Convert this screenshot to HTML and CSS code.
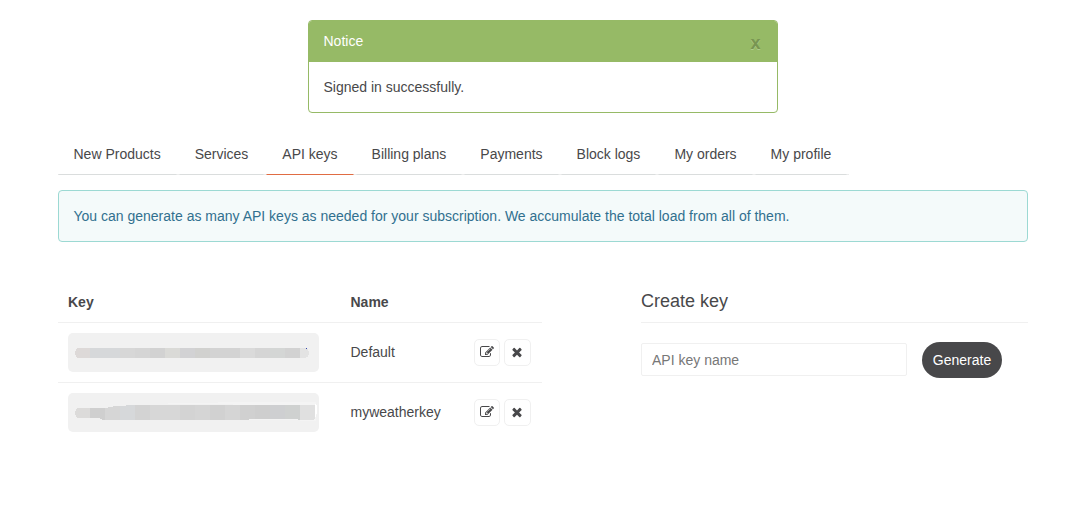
FILE: index.html
```html
<!DOCTYPE html>
<html lang="en">
<head>
<meta charset="utf-8">
<title>API keys</title>
<link rel="stylesheet" href="styles.css">
</head>
<body>
<svg class="sprite" aria-hidden="true">
  <symbol id="edit" viewBox="0 0 1792 1792"><path d="M888 1184l116-116-152-152-116 116v56h96v96h56zm440-720q-16-16-33 1l-350 350q-17 17-1 33t33-1l350-350q17-17 1-33zm80 594v190q0 119-84.5 203.5t-203.5 84.5h-832q-119 0-203.5-84.5t-84.5-203.5v-832q0-119 84.5-203.5t203.5-84.5h832q63 0 117 25 15 7 18 23 3 17-9 29l-49 49q-14 14-32 8-23-6-45-6h-832q-66 0-113 47t-47 113v832q0 66 47 113t113 47h832q66 0 113-47t47-113v-126q0-13 9-22l64-64q15-15 35-7t20 29zm-96-738l288 288-672 672h-288v-288zm444 132l-92 92-288-288 92-92q28-28 68-28t68 28l152 152q28 28 28 68t-28 68z"/></symbol>
  <symbol id="times" viewBox="0 0 1792 1792"><path d="M1490 1322q0 40-28 68l-136 136q-28 28-68 28t-68-28l-294-294-294 294q-28 28-68 28t-68-28l-136-136q-28-28-28-68t28-68l294-294-294-294q-28-28-28-68t28-68l136-136q28-28 68-28t68 28l294 294 294-294q28-28 68-28t68 28l136 136q28 28 28 68t-28 68l-294 294 294 294q28 28 28 68z"/></symbol>
</svg>
<main class="container">
  <section class="notice">
    <header class="notice-head"><span>Notice</span><button class="notice-close">x</button></header>
    <div class="notice-body">Signed in successfully.</div>
  </section>

  <nav class="tabs">
    <a class="tab">New Products</a><a class="tab">Services</a><a class="tab active">API keys</a><a class="tab">Billing plans</a><a class="tab">Payments</a><a class="tab">Block logs</a><a class="tab">My orders</a><a class="tab">My profile</a>
  </nav>

  <div class="alert">You can generate as many API keys as needed for your subscription. We accumulate the total load from all of them.</div>

  <div class="columns">
    <section class="keys">
      <div class="row head"><span>Key</span><span>Name</span></div>
      <div class="row">
        <svg class="key" viewBox="0 0 251 39" shape-rendering="crispEdges">
          <path fill="#ddd9d8" d="M9 15H22V25H9V24H8V22H7V18H8V16H9z"/>
          <path fill="#d6d8da" d="M22 15h30v10H22z"/><path fill="#d7d7d7" d="M52 15h15v10H52z"/>
          <path fill="#d5d5d5" d="M67 15h15v10H67z"/><path fill="#d2d2d2" d="M82 15h15v10H82z"/>
          <path fill="#dadad7" d="M97 15h15v10H97z"/><path fill="#d2d2d4" d="M112 15h15v10h-15z"/>
          <path fill="#d1d1cf" d="M127 15h15v10h-15z"/><path fill="#d3d3d3" d="M142 15h30v10h-30z"/>
          <path fill="#dadada" d="M172 15h15v10h-15z"/><path fill="#d5d5d5" d="M187 15h15v10h-15z"/>
          <path fill="#d4d6d5" d="M202 15h15v10h-15z"/><path fill="#d2d2d2" d="M217 15h15v10h-15z"/>
          <path fill="#e3e3e3" d="M232 15h7v1h1v2h1v4h-1v2h-2v1h-6z"/><path fill="#3546b0" d="M238 15h1v1h-1z"/>
        </svg>
        <span class="name">Default</span>
        <span class="actions"><button class="icon-btn edit"><svg><use href="#edit"/></svg></button><button class="icon-btn"><svg><use href="#times"/></svg></button></span>
      </div>
      <div class="row">
        <svg class="key" viewBox="0 0 251 39" shape-rendering="crispEdges">
          <path fill="#f4f4f4" d="M100 11V10H150V9H248V12H249V22H248V28H232V27H181V26H229V12z"/>
          <path fill="#dcdbda" d="M9 15H22V25H9V24H8V22H7V18H8V16H9z"/>
          <path fill="#cfcfcf" d="M22 15h15v12h-3v-1h-2v-1H22z"/><path fill="#d6d6d6" d="M37 15h3v-1h5v-1h7v14H37z"/>
          <path fill="#d6d8da" d="M52 13h6v-1h9v15H52z"/><path fill="#d3d3d3" d="M67 12h15v15H67z"/>
          <path fill="#d7d7d7" d="M82 12h30v15H82z"/><path fill="#d3d3d3" d="M112 12h15v15h-15z"/>
          <path fill="#d5d5d5" d="M127 12h15v15h-15z"/><path fill="#d1d1d1" d="M142 12h15v15h-15z"/>
          <path fill="#d5d5d5" d="M157 12h15v15h-15z"/><path fill="#d0d0d0" d="M172 12h15v14h-6v1h-9z"/>
          <path fill="#cecece" d="M187 12h15v14h-15z"/><path fill="#cecfd1" d="M202 12h15v14h-15z"/>
          <path fill="#cfd1d0" d="M217 12h15v15h-2v-1h-13z"/><path fill="#e0e0e0" d="M232 12h10v15h-10zM242 12h5v14h-1v1h-4z"/>
          <path fill="#fff" d="M247 11h1v1h1v9h-1v3h-1z"/>
        </svg>
        <span class="name">myweatherkey</span>
        <span class="actions"><button class="icon-btn edit"><svg><use href="#edit"/></svg></button><button class="icon-btn"><svg><use href="#times"/></svg></button></span>
      </div>
    </section>

    <section class="create">
      <h2>Create key</h2>
      <form class="create-form">
        <input type="text" placeholder="API key name">
        <button type="button" class="generate">Generate</button>
      </form>
    </section>
  </div>
</main>
</body>
</html>
```
FILE: styles.css
```css
* { box-sizing: border-box; }
body { margin: 0; background: #fff; color: #48484a; font: 14px/20px "Liberation Sans", Arial, sans-serif; }
button, input { font: inherit; margin: 0; }
.sprite { display: none; }
.container { width: 970px; margin: 0 auto; padding-top: 20px; }

.notice { width: 470px; height: 93px; margin: 0 auto; border: 1px solid #96ba66; border-radius: 4px; overflow: hidden; }
.notice-head { display: flex; justify-content: space-between; align-items: flex-start; height: 41px; padding: 10px 16px 0 15px; background: #96ba66; color: #fff; }
.notice-close { border: 0; padding: 2px 0 0; background: none; color: #789552; font-size: 18px; line-height: 20px; font-weight: bold; text-shadow: 0 1px 0 #b0cc8c; }
.notice-body { padding: 15px; }

.tabs { display: flex; width: max-content; height: 42px; margin-top: 20px; background: linear-gradient(#ececec, #ececec) bottom / 100% 1px no-repeat; }
.tab { height: 42px; margin-right: 2px; padding: 11px 15px 0; border: 0 solid transparent; border-width: 0 1px 1px; border-bottom-color: #dadddd; }
.tab.active { border-bottom-color: #e06c43; }

.alert { height: 52px; margin-top: 15px; padding: 15px 14px 15px 15px; border: 1px solid #9cd9d3; border-radius: 4px; background: #f4fafa; color: #31708f; }

.columns { display: flex; justify-content: space-between; margin-top: 40px; }
.keys { width: 484.5px; }
.row { display: grid; grid-template-columns: 282.5px 123px 58px; align-items: center; height: 60px; padding: 0 10px 0 10.5px; border-top: 1px solid #f0f0f0; }
.row.head { height: 40px; border: 0; font-weight: bold; }
.key { width: 251px; height: 39px; border-radius: 5px; background: #f1f1f1; }
.name { padding-bottom: 2px; }
.actions { display: flex; gap: 4px; padding-bottom: 1px; }
.icon-btn { display: flex; align-items: center; justify-content: center; width: 27px; height: 27px; padding: 0; border: 1px solid #f0f0f0; border-radius: 5px; background: #fff; }
.icon-btn.edit { width: 26px; }
.icon-btn svg { width: 14px; height: 14px; margin-bottom: 1px; fill: #48484a; }

.create { width: 387px; }
.create h2 { height: 41px; margin: 0; padding: 9px 0 0 .5px; border-bottom: 1px solid #f0f0f0; font-size: 18px; font-weight: normal; }
.create-form { display: flex; align-items: flex-start; gap: 15px; margin-top: 19px; }
.create-form input { width: 266px; height: 33px; margin-top: 1px; padding: 1px 10px 0 10.5px; border: 1px solid #f0f0f0; border-radius: 2px; color: #48484a; }
.create-form input::placeholder { color: #777; }
.generate { width: 80px; height: 36px; padding: 0 0 0 1px; border: 0; border-radius: 18px; background: #48484a; color: #fff; }
```
